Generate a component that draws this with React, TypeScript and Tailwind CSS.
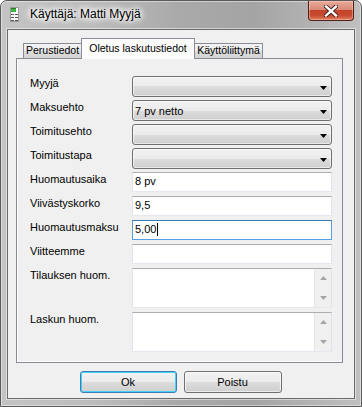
import React from "react";

const btnGrad =
  "bg-[linear-gradient(to_bottom,#f2f2f2_0%,#ebebeb_50%,#dddddd_50%,#cfcfcf_100%)]";

function DownArrow({ color = "#000" }: { color?: string }) {
  return (
    <svg width="7" height="4" viewBox="0 0 7 4" className="block">
      <path d="M0 0H7L3.5 4Z" fill={color} />
    </svg>
  );
}

function UpArrow({ color = "#a6a6a6" }: { color?: string }) {
  return (
    <svg width="7" height="4" viewBox="0 0 7 4" className="block">
      <path d="M0 4H7L3.5 0Z" fill={color} />
    </svg>
  );
}

function Combo({ value }: { value?: string }) {
  return (
    <div className="flex h-[21px] w-[200px] items-center rounded-[3px] border border-[#707070] bg-[linear-gradient(to_bottom,#f2f2f2_0%,#ebebeb_50%,#dddddd_50%,#cfcfcf_100%)] pl-[2px] pr-[4px] shadow-[inset_0_0_0_1px_rgba(255,255,255,0.55)]">
      <span className="flex-1 pt-[1px] leading-[13px]">{value}</span>
      <div className="mt-[2px]">
        <DownArrow />
      </div>
    </div>
  );
}

function TextBox({ value, focused }: { value?: string; focused?: boolean }) {
  return (
    <div
      className={
        focused
          ? "flex h-[20px] w-[200px] items-start border border-[#569de5] border-t-[#3d7bad] bg-white pl-[2px] pt-[2px] leading-[13px]"
          : "flex h-[20px] w-[200px] items-start border border-[#e2e3ea] border-t-[#abadb3] border-b-[#e3e9ef] bg-white pl-[2px] pt-[2px] leading-[13px]"
      }
    >
      <span>{value}</span>
      {focused ? <span className="ml-[1px] mt-[0px] h-[13px] w-[1px] bg-black" /> : null}
    </div>
  );
}

function TextArea() {
  return (
    <div className="flex h-[40px] w-[200px] border border-[#e2e3ea] border-t-[#abadb3] border-b-[#e3e9ef] bg-white">
      <div className="flex-1" />
      <div className="flex w-[17px] flex-col items-center justify-between border-l border-[#e6e6e6] bg-[#f0f0f0] py-[7px]">
        <UpArrow />
        <DownArrow color="#a6a6a6" />
      </div>
    </div>
  );
}

function Row({
  label,
  children,
  className,
}: {
  label: string;
  children: React.ReactNode;
  className: string;
}) {
  return (
    <div className={className}>
      <div className="flex">
        <div className="w-[102px] pt-[1px] leading-[13px]">{label}</div>
        {children}
      </div>
    </div>
  );
}

function TitleIcon() {
  return (
    <svg width="9" height="15" viewBox="0 0 9 15" className="block">
      <rect x="0.5" y="0.5" width="8" height="14" fill="#f7f7f7" stroke="#9a9a9a" />
      <rect x="1" y="1" width="5" height="4" fill="#3fb53f" />
      <rect x="1" y="1" width="5" height="1" fill="#1f7f1f" />
      <rect x="1" y="7" width="3" height="1" fill="#555" />
      <rect x="5" y="7" width="3" height="1" fill="#555" />
      <rect x="1" y="10" width="3" height="1" fill="#555" />
      <rect x="5" y="10" width="3" height="1" fill="#555" />
      <rect x="1" y="13" width="3" height="1" fill="#555" />
      <rect x="5" y="13" width="3" height="1" fill="#555" />
    </svg>
  );
}

export default function App() {
  return (
    <div className="relative h-[407px] w-[362px] overflow-hidden rounded-t-[7px] border border-[#5a5a5a] bg-[linear-gradient(90deg,#c4c4c4_0%,#bcbcbc_25%,#a9a9a9_50%,#a4a4a4_70%,#b6b6b6_90%,#c0c0c0_100%)] font-['Liberation_Sans',Arial,sans-serif] text-[11px] text-black shadow-[inset_0_0_0_1px_rgba(255,255,255,0.45)]">
      {/* Title bar */}
      <div className="flex h-[28px] items-start pl-[9px] pt-[6px]">
        <TitleIcon />
        <span className="ml-[11px] mt-[0px] text-[12px] leading-[15px] [text-shadow:0_0_8px_#fff,0_0_8px_#fff,0_0_6px_#fff,0_0_4px_#fff]">
          Käyttäjä: Matti Myyjä
        </span>
      </div>

      {/* Close button */}
      <div className="absolute left-[307px] top-0 flex h-[20px] w-[46px] items-center justify-center rounded-b-[4px] border border-t-0 border-[#4e1f17] bg-[linear-gradient(to_bottom,#e9aa99_0%,#d98a78_45%,#c2442a_50%,#c7482d_75%,#e07e60_100%)] shadow-[inset_0_0_0_1px_rgba(255,210,200,0.45)]">
        <svg width="14" height="12" viewBox="0 0 14 12" className="block">
          <path d="M2 1.5L12 10.5M12 1.5L2 10.5" stroke="#3a1a14" strokeWidth="4.2" strokeLinecap="square" />
          <path d="M2 1.5L12 10.5M12 1.5L2 10.5" stroke="#ffffff" strokeWidth="2.4" strokeLinecap="square" />
        </svg>
      </div>

      {/* Client area */}
      <div className="ml-[6px] flex h-[370px] w-[348px] flex-col border border-[#6a6a6a] bg-[#f0f0f0] shadow-[0_0_0_1px_rgba(255,255,255,0.5)]">
        <div className="ml-[8px] mt-[8px] w-[327px]">
          {/* Tabs */}
          <div className="flex h-[20px] items-end pl-[7px]">
            <div className="h-[15px] w-[58px] border-l border-t border-[#898c95] bg-[linear-gradient(to_bottom,#f3f3f3_0%,#ebebeb_50%,#dddddd_50%,#d3d3d3_100%)] pl-[2px] text-[10.5px] leading-[13px]">
              Perustiedot
            </div>
            <div className="relative z-10 -mb-[1px] h-[21px] w-[114px] border-x border-t border-[#898c95] bg-[#fcfcfc] pt-[2px] text-center text-[10.5px] leading-[14px]">
              Oletus laskutustiedot
            </div>
            <div className="h-[15px] w-[68px] border-r border-t border-[#898c95] bg-[linear-gradient(to_bottom,#f3f3f3_0%,#ebebeb_50%,#dddddd_50%,#d3d3d3_100%)] text-center text-[10.5px] leading-[13px]">
              Käyttöliittymä
            </div>
          </div>

          {/* Panel */}
          <div className="h-[305px] border border-[#898c95] bg-[#f0f0f0] pl-[13px] pt-[17px] shadow-[inset_1px_-1px_0_#ffffff]">
            <Row label="Myyjä" className="">
              <Combo />
            </Row>
            <Row label="Maksuehto" className="mt-[3px]">
              <Combo value="7 pv netto" />
            </Row>
            <Row label="Toimitusehto" className="mt-[3px]">
              <Combo />
            </Row>
            <Row label="Toimitustapa" className="mt-[3px]">
              <Combo />
            </Row>
            <Row label="Huomautusaika" className="mt-[3px]">
              <TextBox value="8 pv" />
            </Row>
            <Row label="Viivästyskorko" className="mt-[4px]">
              <TextBox value="9,5" />
            </Row>
            <Row label="Huomautusmaksu" className="mt-[4px]">
              <TextBox value="5,00" focused />
            </Row>
            <Row label="Viitteemme" className="mt-[4px]">
              <TextBox />
            </Row>
            <Row label="Tilauksen huom." className="mt-[4px]">
              <TextArea />
            </Row>
            <Row label="Laskun huom." className="mt-[4px]">
              <TextArea />
            </Row>
          </div>
        </div>

        {/* Buttons */}
        <div className="mt-[8px] flex justify-center gap-[7px] pr-[1px]">
          <button className={`h-[22px] w-[97px] rounded-[3px] border border-[#3c7fb1] ${btnGrad} leading-[13px] shadow-[inset_0_0_0_1px_#48d0f8]`}>
            Ok
          </button>
          <button className={`h-[22px] w-[98px] rounded-[3px] border border-[#707070] ${btnGrad} leading-[13px] shadow-[inset_0_0_0_1px_rgba(255,255,255,0.6)]`}>
            Poistu
          </button>
        </div>
      </div>
    </div>
  );
}
